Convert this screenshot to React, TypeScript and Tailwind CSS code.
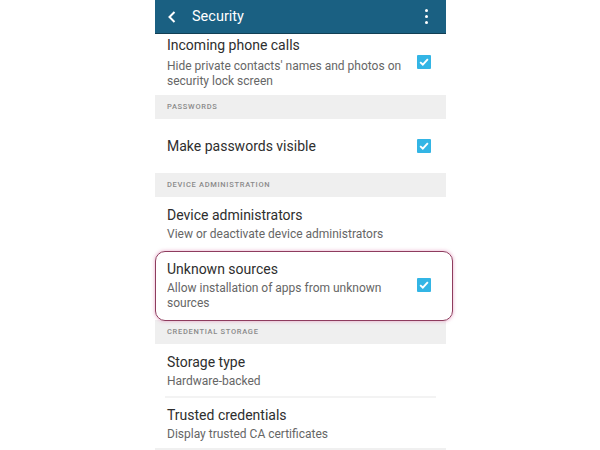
import React from 'react';

function Check() {
  return (
    <div className="flex h-[14px] w-[14px] shrink-0 items-center justify-center rounded-[1px] bg-[#33b5e5]">
      <svg viewBox="0 0 14 14" className="h-[12px] w-[12px]">
        <path d="M2.5 7.2 L5.6 10 L11.5 3.6" fill="none" stroke="#fff" strokeWidth="2.2" />
      </svg>
    </div>
  );
}

function Band({ label }: { label: string }) {
  return (
    <div className="flex h-[24px] items-center bg-[#efefef] px-[12px] text-[7.5px] font-medium uppercase tracking-[0.7px] text-[#8a8a8a]">
      {label}
    </div>
  );
}

function Row({
  title,
  lines,
  checked,
  height,
}: {
  title: string;
  lines?: string[];
  checked?: boolean;
  height: string;
}) {
  return (
    <div className={`flex items-center pl-[12px] pr-[15px] ${height}`}>
      <div className="flex flex-1 flex-col">
        <span className="text-[14px] leading-[20px] text-[#2e2e2e]">{title}</span>
        {lines && (
          <div className="mt-[2px] flex flex-col">
            {lines.map((l) => (
              <span key={l} className="text-[12px] leading-[15px] text-[#666]">
                {l}
              </span>
            ))}
          </div>
        )}
      </div>
      {checked && <Check />}
    </div>
  );
}

export default function App() {
  return (
    <div
      className="h-[450px] w-[600px] overflow-hidden bg-white"
      style={{ fontFamily: 'Roboto, "Noto Sans", sans-serif' }}
    >
      <div className="relative ml-[155px] w-[291px]">
        {/* Action bar */}
        <div className="flex h-[34px] items-center border-b border-[#123f54] bg-[#1a6082] px-[12px] text-white">
          <svg viewBox="0 0 12 16" className="h-[14px] w-[10px]">
            <path d="M9 2 L3 8 L9 14" fill="none" stroke="#fff" strokeWidth="2.4" />
          </svg>
          <span className="ml-[15px] text-[14.5px]">Security</span>
          <div className="ml-auto mr-[6px] flex flex-col gap-[3px]">
            <span className="h-[3px] w-[3px] rounded-full bg-white" />
            <span className="h-[3px] w-[3px] rounded-full bg-white" />
            <span className="h-[3px] w-[3px] rounded-full bg-white" />
          </div>
        </div>

        <div className="flex h-[61px] items-start pl-[12px] pr-[15px] pt-[1px]">
          <div className="flex flex-1 flex-col">
            <span className="text-[14px] leading-[20px] text-[#2e2e2e]">Incoming phone calls</span>
            <div className="mt-[4px] flex flex-col">
              <span className="text-[12px] leading-[15px] text-[#666]">
                Hide private contacts' names and photos on
              </span>
              <span className="text-[12px] leading-[15px] text-[#666]">security lock screen</span>
            </div>
          </div>
          <div className="mt-[20px]">
            <Check />
          </div>
        </div>

        <Band label="Passwords" />
        <Row title="Make passwords visible" checked height="h-[54px]" />
        <Band label="Device administration" />
        <Row
          title="Device administrators"
          lines={['View or deactivate device administrators']}
          height="h-[52px]"
        />
        <Row
          title="Unknown sources"
          lines={['Allow installation of apps from unknown', 'sources']}
          checked
          height="h-[71px]"
        />
        <Band label="Credential storage" />
        <Row title="Storage type" lines={['Hardware-backed']} height="h-[52px]" />
        <div className="mx-[10px] h-[2px] bg-[#f3f3f3]" />
        <Row title="Trusted credentials" lines={['Display trusted CA certificates']} height="h-[50px]" />
        <div className="h-[2px] bg-[#f0f0f0]" />

        {/* highlight around Unknown sources */}
        <div className="pointer-events-none absolute left-0 top-[251px] h-[70px] w-[298px] rounded-[10px] border border-[#8e3c5e] shadow-[0_0_3px_1px_rgba(230,150,190,0.5)]" />
      </div>
    </div>
  );
}
